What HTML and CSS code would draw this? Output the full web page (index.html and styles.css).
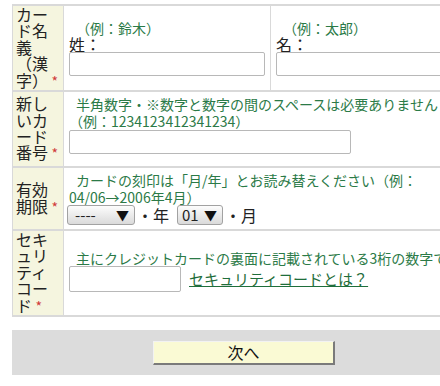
FILE: index.html
```html
<!DOCTYPE html>
<html lang="ja">

<head>
    <meta charset="UTF-8">
    <meta name="viewport" content="width=device-width, initial-scale=1.0">
    <title>カード情報の入力</title>
    <link rel="stylesheet" href="styles.css">
</head>

<body>
    <div class="page">
        <div class="form-grid">
            <!-- カード名義 -->
            <div class="label"><span>カード名義（漢字）&nbsp;<span class="req">*</span></span></div>
            <div class="cell">
                <div class="note">（例：鈴木）</div>
                <div class="field-name">姓：</div>
                <input class="text-input full" type="text">
            </div>
            <div class="cell">
                <div class="note">（例：太郎）</div>
                <div class="field-name">名：</div>
                <input class="text-input full" type="text">
            </div>

            <!-- カード番号 -->
            <div class="label"><span>新しいカード番号&nbsp;<span class="req">*</span></span></div>
            <div class="cell wide">
                <div class="note">半角数字・※数字と数字の間のスペースは必要ありません<br>（例：1234123412341234）</div>
                <input class="text-input card-no" type="text">
            </div>

            <!-- 有効期限 -->
            <div class="label"><span>有効期限&nbsp;<span class="req">*</span></span></div>
            <div class="cell wide">
                <div class="note">カードの刻印は「月/年」とお読み替えください（例：04/06→2006年4月）</div>
                <div class="expire-row">
                    <span class="select year">
                        <select>
                            <option>----</option>
                        </select>
                        <span class="arrow">▼</span>
                    </span>
                    <span class="unit">・年</span>
                    <span class="select month">
                        <select>
                            <option>01</option>
                        </select>
                        <span class="arrow">▼</span>
                    </span>
                    <span class="unit">・月</span>
                </div>
            </div>

            <!-- セキュリティコード -->
            <div class="label"><span>セキュリティコード&nbsp;<span class="req">*</span></span></div>
            <div class="cell wide">
                <div class="note single">主にクレジットカードの裏面に記載されている3桁の数字です。</div>
                <div class="code-row">
                    <input class="text-input code" type="text">
                    <a class="help-link" href="#">セキュリティコードとは？</a>
                </div>
            </div>
        </div>

        <div class="actions">
            <button class="next-btn" type="button">次へ</button>
        </div>
    </div>
</body>

</html>
```

FILE: styles.css
```css
html {
    overflow: hidden;
}

body {
    margin: 0;
    background: #fff;
    color: #222;
    font-family: "Noto Sans CJK JP", sans-serif;
}

.page {
    width: 464px;
    padding: 4px 0 0 12px;
}

/* 枠線は grid の隙間で出す */
.form-grid {
    display: grid;
    grid-template-columns: 50px 206px 1fr;
    gap: 2px 1px;
    padding: 2px 0 2px 1px;
    background: #d9d9d9;
}

.label {
    display: flex;
    align-items: center;
    padding: 0 1px 2px 3px;
    background: #f5f5df;
    font-size: 16px;
    line-height: 16.4px;
    line-break: loose;
}

.req {
    color: #d03a3a;
    font-size: 14px;
    line-height: 10px;
}

.cell {
    display: flex;
    flex-direction: column;
    justify-content: center;
    padding: 4px 5px;
    background: #fff;
    min-width: 0;
}

.cell.wide {
    grid-column: span 2;
}

.note {
    color: #2b7a47;
    font-size: 14px;
    line-height: 16.5px;
    text-indent: 7px;
}

/* はみ出しても折り返さない */
.note.single {
    white-space: nowrap;
}

.field-name {
    font-size: 16px;
    line-height: 16px;
}

.text-input {
    box-sizing: border-box;
    height: 24px;
    border: 1px solid #b8b8b8;
    border-radius: 2px;
    background: #fff;
}

.text-input.full {
    width: 100%;
}

.text-input.card-no {
    width: 282px;
    margin: 1px 0 8px;
}

.code-row {
    display: flex;
    align-items: center;
    gap: 8px;
    margin-bottom: 4px;
}

.text-input.code {
    width: 112px;
    height: 26px;
}

.help-link {
    color: #1f6e3b;
    font-size: 15px;
    line-height: 18px;
}

/* 有効期限のセレクト */
.expire-row {
    display: flex;
    align-items: center;
    gap: 2px;
    margin-left: -2px;
}

.select {
    display: inline-flex;
    align-items: center;
    box-sizing: border-box;
    height: 20px;
    padding: 0 5px 0 7px;
    border: 1px solid #a2a2a2;
    border-radius: 3px;
    background: linear-gradient(#fdfdfd, #dadada);
}

.select.year {
    width: 68px;
}

.select.month {
    width: 46px;
    padding-left: 4px;
}

.select select {
    flex: 1;
    min-width: 0;
    padding: 0;
    border: 0;
    background: transparent;
    appearance: none;
    font-family: inherit;
    font-size: 15px;
    line-height: 18px;
    color: #222;
}

.select .arrow {
    font-size: 13px;
    line-height: 14px;
    color: #111;
}

.unit {
    font-size: 16px;
    line-height: 18px;
    margin-right: 6px;
}

.actions {
    display: flex;
    justify-content: center;
    align-items: center;
    height: 45px;
    margin-top: 13px;
    background: #dcdcdc;
}

.next-btn {
    width: 182px;
    height: 24px;
    padding: 0;
    border-style: solid;
    border-width: 1px 2px 2px 1px;
    border-color: #f2f2f2 #7a7a7a #7a7a7a #f2f2f2;
    background: #fafad4;
    font-family: inherit;
    font-size: 16px;
    line-height: 20px;
    color: #111;
}
```
